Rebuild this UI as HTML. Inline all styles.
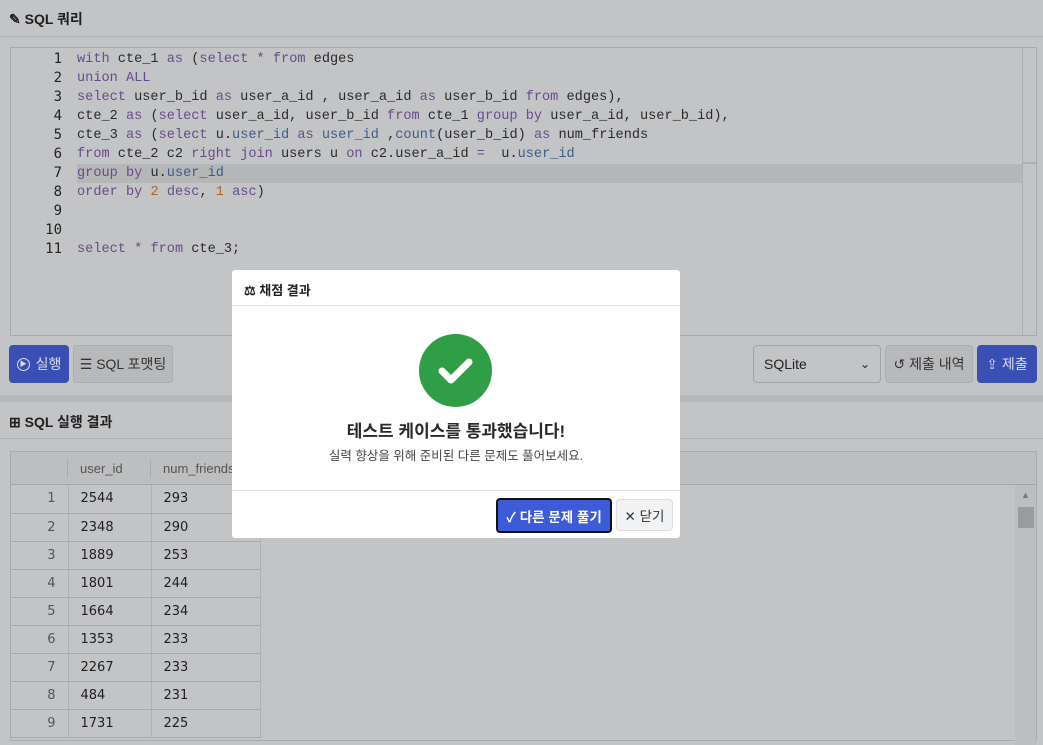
<!DOCTYPE html>
<html><head><meta charset="utf-8"><style>
*{box-sizing:border-box;margin:0;padding:0}
body{width:1043px;height:730px;overflow:hidden;background:#c3c4c6;font-family:"Liberation Sans","Noto Sans CJK KR",sans-serif;color:#1f1f20;position:relative}
.abs{position:absolute}
.hdr{font-weight:bold;font-size:14px}
.code{position:absolute;left:10px;top:47px;width:1027px;height:289px;border:1px solid #a9aaac;background:#c3c4c6}
.ln{position:absolute;left:0;width:52px;text-align:right;font-family:"DejaVu Sans Mono","Liberation Mono",monospace;font-size:14px;color:#222}
.cl{position:absolute;left:67px;font-family:"Liberation Mono",monospace;font-size:13.6px;color:#2a2a2b;white-space:pre}
.k{color:#6a4a8c}.b{color:#3d5b8c}.n{color:#b0661f}
.btn{position:absolute;border-radius:4px;font-size:14px;display:flex;align-items:center;justify-content:center;gap:6px}
table{border-collapse:collapse;font-size:13px;font-family:"DejaVu Sans","Liberation Sans",sans-serif}
td{height:28px;border-bottom:1px solid #a9aaac;border-right:1px solid #b0b1b3;padding-left:12px}
td.i{text-align:right;padding-right:12px;color:#555;width:57px}
</style></head><body>
<div class="abs hdr" style="left:9px;top:9px">✎ SQL 쿼리</div>
<div class="abs" style="left:0;top:36px;width:1043px;height:1px;background:#aeafb1"></div>
<div class="code">
<div class="abs" style="left:66px;top:116px;width:946px;height:19px;background:#b5b6b8"></div>
<div class="abs" style="right:0;top:0;width:14px;height:287px;border-left:1px solid #aeafb1"></div>
<div class="abs" style="right:0;top:114px;width:14px;height:2px;background:#aeafb1"></div>
</div>
<div class="abs" style="left:10px;top:50px">
<div class="ln" style="top:1px">1</div><div class="ln" style="top:20px">2</div><div class="ln" style="top:39px">3</div><div class="ln" style="top:58px">4</div><div class="ln" style="top:77px">5</div><div class="ln" style="top:96px">6</div><div class="ln" style="top:115px">7</div><div class="ln" style="top:134px">8</div><div class="ln" style="top:153px">9</div><div class="ln" style="top:172px">10</div><div class="ln" style="top:191px">11</div>
</div>
<div class="abs" style="left:10px;top:51px">
<div class="cl" style="top:1px"><span class="k">with</span> cte_1 <span class="k">as</span> (<span class="k">select</span> <span class="k">*</span> <span class="k">from</span> edges</div>
<div class="cl" style="top:20px"><span class="k">union</span> <span class="k">ALL</span></div>
<div class="cl" style="top:39px"><span class="k">select</span> user_b_id <span class="k">as</span> user_a_id , user_a_id <span class="k">as</span> user_b_id <span class="k">from</span> edges),</div>
<div class="cl" style="top:58px">cte_2 <span class="k">as</span> (<span class="k">select</span> user_a_id, user_b_id <span class="k">from</span> cte_1 <span class="k">group</span> <span class="k">by</span> user_a_id, user_b_id),</div>
<div class="cl" style="top:77px">cte_3 <span class="k">as</span> (<span class="k">select</span> u.<span class="b">user_id</span> <span class="k">as</span> <span class="b">user_id</span> ,<span class="b">count</span>(user_b_id) <span class="k">as</span> num_friends</div>
<div class="cl" style="top:96px"><span class="k">from</span> cte_2 c2 <span class="k">right</span> <span class="k">join</span> users u <span class="k">on</span> c2.user_a_id <span class="k">=</span>  u.<span class="b">user_id</span></div>
<div class="cl" style="top:115px"><span class="k">group</span> <span class="k">by</span> u.<span class="b">user_id</span></div>
<div class="cl" style="top:134px"><span class="k">order</span> <span class="k">by</span> <span class="n">2</span> <span class="k">desc</span>, <span class="n">1</span> <span class="k">asc</span>)</div>
<div class="cl" style="top:191px"><span class="k">select</span> <span class="k">*</span> <span class="k">from</span> cte_3;</div>
</div>
<div class="btn" style="left:9px;top:345px;width:60px;height:38px;background:#3a4fb3;color:#dde"><span style="border:1.5px solid #dde;border-radius:50%;width:13px;height:13px;display:inline-flex;align-items:center;justify-content:center;font-size:7px">▶</span>실행</div>
<div class="btn" style="left:73px;top:345px;width:100px;height:38px;background:#b8b9bb;border:1px solid #acadaf;color:#333">☰ SQL 포맷팅</div>
<div class="btn" style="left:753px;top:345px;width:128px;height:38px;border:1px solid #a2a3a5;justify-content:space-between;padding:0 10px;color:#222">SQLite<span style="font-size:12px">⌄</span></div>
<div class="btn" style="left:885px;top:345px;width:88px;height:38px;background:#b8b9bb;border:1px solid #acadaf;color:#333">↺ 제출 내역</div>
<div class="btn" style="left:977px;top:345px;width:60px;height:38px;background:#3a4fb3;color:#dde">⇪ 제출</div>
<div class="abs" style="left:0;top:395px;width:1043px;height:7px;background:#b6b7b9"></div>
<div class="abs hdr" style="left:9px;top:412px">⊞ SQL 실행 결과</div>
<div class="abs" style="left:0;top:438px;width:1043px;height:1px;background:#aeafb1"></div>
<div class="abs" style="left:10px;top:451px;width:1027px;height:290px;border:1px solid #a9aaac;background:#c3c4c6">
<div class="abs" style="left:0;top:0;width:1025px;height:33px;background:#bdbec0;border-bottom:1px solid #a3a4a6"></div>
<div class="abs" style="left:56px;top:8px;width:1px;height:18px;background:#a9aaac"></div>
<div class="abs" style="left:139px;top:8px;width:1px;height:18px;background:#a9aaac"></div>
<div class="abs" style="left:69px;top:9px;font-size:13px;color:#555">user_id</div>
<div class="abs" style="left:152px;top:9px;font-size:13px;color:#555">num_friends</div>
<div class="abs" style="left:1004px;top:33px;width:21px;height:260px;background:#bdbec0"></div>
<div class="abs" style="left:1010px;top:38px;font-size:9px;color:#777">▲</div>
<div class="abs" style="left:1007px;top:55px;width:16px;height:21px;background:#9a9b9d"></div>
<table class="abs" style="left:0;top:33px;width:250px">
<tr><td class="i">1</td><td style="width:83px">2544</td><td>293</td></tr>
<tr><td class="i">2</td><td>2348</td><td>290</td></tr>
<tr><td class="i">3</td><td>1889</td><td>253</td></tr>
<tr><td class="i">4</td><td>1801</td><td>244</td></tr>
<tr><td class="i">5</td><td>1664</td><td>234</td></tr>
<tr><td class="i">6</td><td>1353</td><td>233</td></tr>
<tr><td class="i">7</td><td>2267</td><td>233</td></tr>
<tr><td class="i">8</td><td>484</td><td>231</td></tr>
<tr><td class="i">9</td><td>1731</td><td>225</td></tr>
</table>
</div>
<div class="abs" style="left:232px;top:270px;width:448px;height:268px;background:#fff;border-radius:3px">
<div class="abs" style="left:12px;top:10px;font-size:13px;font-weight:bold;color:#222">⚖ 채점 결과</div>
<div class="abs" style="left:0;top:35px;width:448px;height:1px;background:#e3e3e3"></div>
<div class="abs" style="left:187px;top:64px;width:73px;height:73px;border-radius:50%;background:#2f9e46"></div>
<svg class="abs" style="left:187px;top:64px" width="73" height="73"><path d="M23 37 L32 46 L50 28" fill="none" stroke="#fff" stroke-width="7" stroke-linecap="round" stroke-linejoin="round"/></svg>
<div class="abs" style="left:0;top:147px;width:448px;text-align:center;font-size:17px;font-weight:bold;color:#2a2a2a">테스트 케이스를 통과했습니다!</div>
<div class="abs" style="left:0;top:175px;width:448px;text-align:center;font-size:12.5px;color:#444">실력 향상을 위해 준비된 다른 문제도 풀어보세요.</div>
<div class="abs" style="left:0;top:220px;width:448px;height:1px;background:#e3e3e3"></div>
<div class="btn" style="left:264px;top:228px;width:116px;height:35px;background:#3d5ad8;border:2px solid #111;color:#fff;font-size:13.5px;font-weight:bold">✓ 다른 문제 풀기</div>
<div class="btn" style="left:384px;top:229px;width:57px;height:32px;background:#f1f2f3;border:1px solid #ddd;color:#333;font-size:13.5px">✕ 닫기</div>
</div>
</body></html>
